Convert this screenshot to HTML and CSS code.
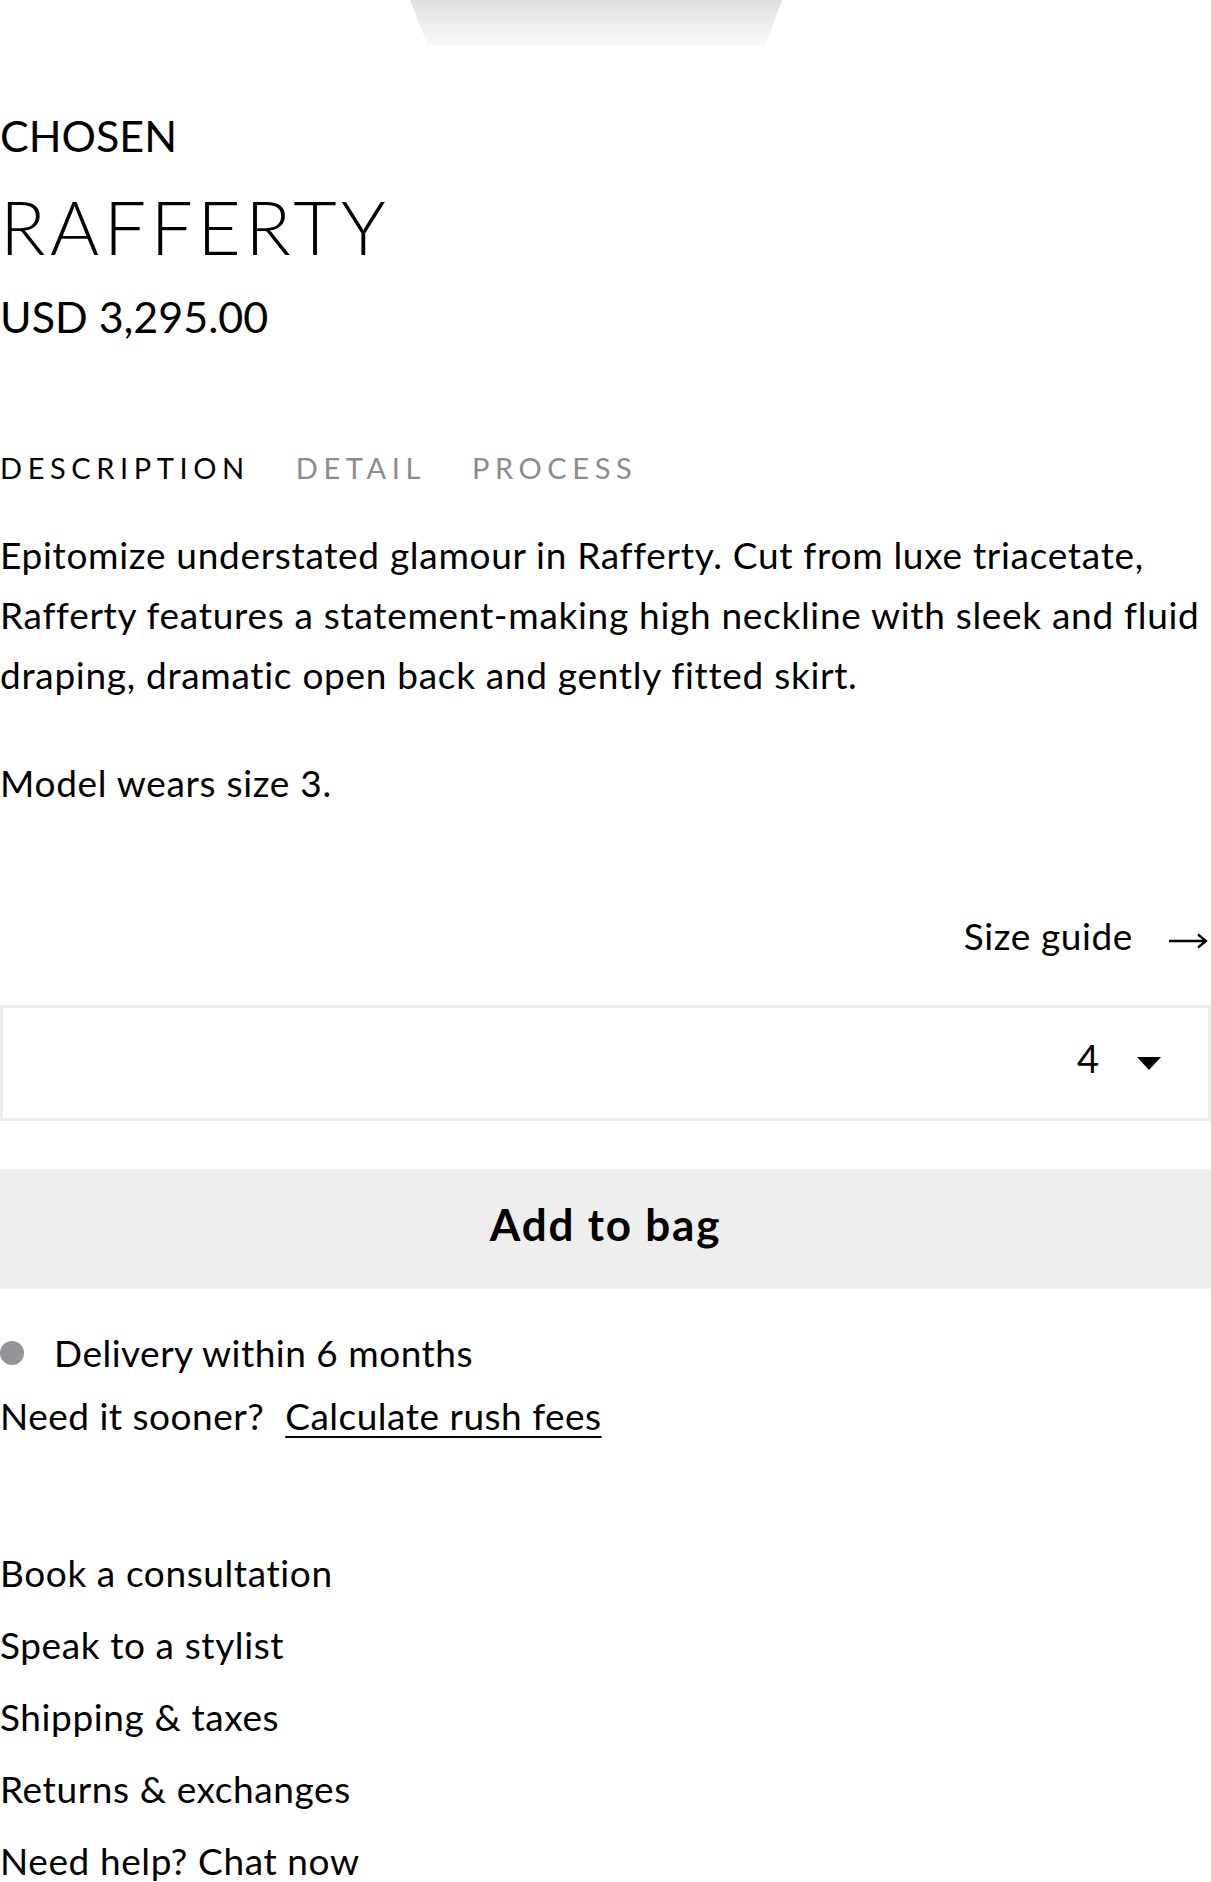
FILE: index.html
```html
<!DOCTYPE html>
<html lang="en">

<head>
    <meta charset="UTF-8">
    <meta name="viewport" content="width=device-width, initial-scale=1.0">
    <title>Rafferty | Chosen</title>
    <link rel="stylesheet" href="styles.css">
</head>

<body>
    <div class="product">
        <!-- bottom edge of the product photo -->
        <div class="photo-edge">
            <svg width="372" height="46" viewBox="0 0 372 46">
                <defs>
                    <linearGradient id="fade" x1="0" y1="0" x2="0" y2="1">
                        <stop offset="0" stop-color="#dedede" />
                        <stop offset="0.6" stop-color="#efefef" />
                        <stop offset="1" stop-color="#f9f9f9" />
                    </linearGradient>
                </defs>
                <polygon points="0,0 372,0 355,46 18,46" fill="url(#fade)" />
            </svg>
        </div>

        <div class="brand">CHOSEN</div>
        <h1 class="name">RAFFERTY</h1>
        <div class="price">USD 3,295.00</div>

        <div class="tabs">
            <span class="tab active">DESCRIPTION</span>
            <span class="tab">DETAIL</span>
            <span class="tab">PROCESS</span>
        </div>

        <div class="description">
            <p>Epitomize understated glamour in Rafferty. Cut from luxe triacetate, Rafferty features a statement-making high neckline with sleek and fluid draping, dramatic open back and gently fitted skirt.</p>
            <p>Model wears size 3.</p>
        </div>

        <div class="size-guide">
            <a href="#">Size guide</a>
            <svg class="arrow" width="40" height="16" viewBox="0 0 40 16">
                <path d="M1 8 H38 M30 1.5 L38 8 L30 14.5" fill="none" stroke="#000" stroke-width="2.3" />
            </svg>
        </div>

        <div class="size-select">
            <span class="size-value">4</span>
            <span class="caret"></span>
        </div>

        <button class="add-to-bag">Add to bag</button>

        <div class="delivery">
            <div class="delivery-line"><span class="dot"></span>Delivery within 6 months</div>
            <div class="delivery-line sooner">Need it sooner? <a href="#" class="rush">Calculate rush fees</a></div>
        </div>

        <ul class="links">
            <li><a href="#">Book a consultation</a></li>
            <li><a href="#">Speak to a stylist</a></li>
            <li><a href="#">Shipping &amp; taxes</a></li>
            <li><a href="#">Returns &amp; exchanges</a></li>
            <li><a href="#">Need help? Chat now</a></li>
        </ul>
    </div>
</body>

</html>
```
FILE: styles.css
```css
body {
    font-family: 'Lato', 'Liberation Sans', sans-serif;
    color: #000;
    background-color: #fff;
    margin: 0;
}

a {
    color: #000;
    text-decoration: none;
}

.product {
    width: 1211px;
}

.photo-edge {
    height: 46px;
    padding-left: 410px;
    line-height: 0;
}

.brand {
    font-size: 43px;
    line-height: 43px;
    margin-top: 68px;
}

.name {
    font-size: 75px;
    line-height: 75px;
    font-weight: 300;
    letter-spacing: 4.5px;
    margin: 32px 0 0;
}

.price {
    font-size: 43px;
    line-height: 43px;
    margin-top: 31px;
}

.tabs {
    display: flex;
    gap: 46px;
    margin-top: 115px;
}

.tab {
    font-size: 29px;
    line-height: 29px;
    letter-spacing: 5.6px;
    color: #8c8c8c;
}

.tab.active {
    color: #000;
}

.description {
    margin-top: 43px;
    font-size: 37px;
    line-height: 60px;
    letter-spacing: 0.7px;
}

.description p {
    margin: 0 0 48px;
}

.description p:last-child {
    margin-bottom: 0;
}

.size-guide {
    display: flex;
    justify-content: flex-end;
    align-items: center;
    gap: 35px;
    margin-top: 93px;
    padding-right: 3px;
    font-size: 37px;
    line-height: 60px;
    letter-spacing: 0.6px;
}

.size-guide .arrow {
    margin-top: 9px;
}

.size-select {
    display: flex;
    justify-content: flex-end;
    align-items: center;
    gap: 38px;
    height: 110px;
    margin-top: 39px;
    padding-right: 47px;
    border: 3px solid #ececec;
    font-size: 38px;
}

.size-value {
    margin-top: -10px;
}

.caret {
    width: 0;
    height: 0;
    border-left: 12px solid transparent;
    border-right: 12px solid transparent;
    border-top: 13px solid #000;
}

.add-to-bag {
    display: block;
    width: 100%;
    height: 120px;
    margin-top: 48px;
    padding: 0 0 10px;
    border: none;
    background-color: #eeeeee;
    font-family: inherit;
    font-size: 44px;
    font-weight: 700;
    letter-spacing: 1.8px;
    color: #000;
    cursor: pointer;
}

.delivery {
    margin-top: 36px;
    font-size: 37px;
    line-height: 56px;
    letter-spacing: 0.5px;
}

.delivery-line {
    display: flex;
    align-items: center;
    white-space: pre;
}

.delivery-line.sooner {
    margin-top: 7px;
}

.dot {
    width: 24px;
    height: 24px;
    border-radius: 50%;
    background-color: #939598;
    margin-right: 30px;
}

.rush {
    margin-left: 11px;
    text-decoration: underline;
    text-decoration-thickness: 2px;
    text-underline-offset: 6px;
}

.links {
    list-style: none;
    margin: 93px 0 0;
    padding: 0;
    font-size: 37px;
    line-height: 72px;
    letter-spacing: 0.6px;
}
```
